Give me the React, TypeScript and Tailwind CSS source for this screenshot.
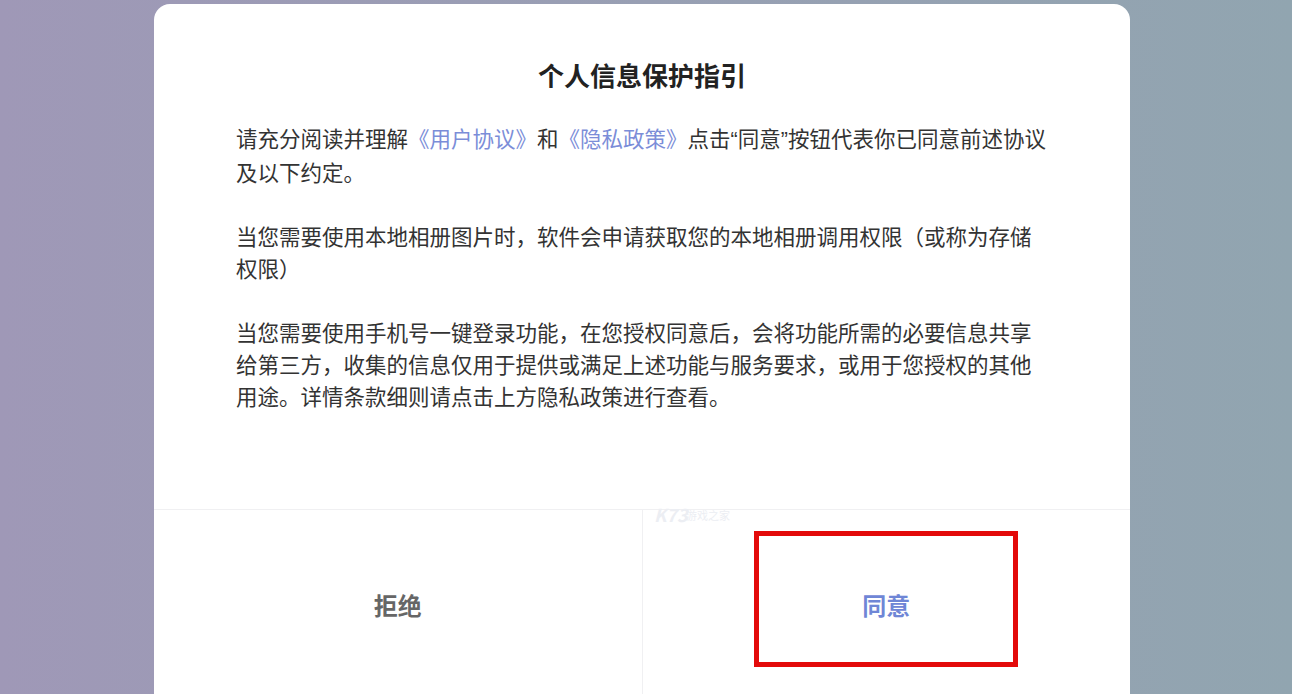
export default function App() {
  return (
    <div
      className="h-[694px] w-full overflow-hidden bg-gradient-to-r from-[#9f98b7] via-[#989fb3] to-[#91a5b0] pt-[4px]"
      style={{ fontFamily: '"Noto Sans CJK SC", "Noto Sans", sans-serif' }}
    >
      <div className="relative ml-[154px] w-[976px] rounded-t-[16px] bg-white">
        <div className="h-[505px] pt-[53px]">
          <h1 className="text-center text-[26px] font-bold leading-[36px] text-[#222]">个人信息保护指引</h1>
          <div className="ml-[82px] mt-[29px] w-[814px] text-[21.5px] leading-[32px] text-[#333]">
            <p className="mb-8">
              请充分阅读并理解<span className="text-[#7b8dd8]">《用户协议》</span>和<span className="text-[#7b8dd8]">《隐私政策》</span>点击<span className="font-['Liberation_Sans']">“</span>同意<span className="font-['Liberation_Sans']">”</span>按钮代表你已同意前述协议及以下约定。
            </p>
            <p className="mb-8">
              当您需要使用本地相册图片时，软件会申请获取您的本地相册调用权限（或称为存储权限）
            </p>
            <p>
              当您需要使用手机号一键登录功能，在您授权同意后，会将功能所需的必要信息共享给第三方，收集的信息仅用于提供或满足上述功能与服务要求，或用于您授权的其他用途。详情条款细则请点击上方隐私政策进行查看。
            </p>
          </div>
        </div>
        <div className="flex h-[194px] border-t border-[#f0f0f2]">
          <button className="flex flex-1 items-center justify-center border-r border-[#f0f0f2] pb-[4px] text-[24px] font-bold text-[#666]">
            拒绝
          </button>
          <button className="flex flex-1 items-center justify-center pb-[4px] text-[24px] font-bold text-[#6f86d6]">
            同意
          </button>
        </div>
        <div className="absolute left-[600px] top-[527px] h-[136px] w-[264px] border-[5px] border-[#e30a0a]" />
        <div className="absolute left-[500px] top-[497px] text-[18px] font-bold italic text-[#eceef3]">K73</div>
        <div className="absolute left-[532px] top-[503px] text-[11px] text-[#eceef3]">游戏之家</div>
      </div>
    </div>
  );
}
